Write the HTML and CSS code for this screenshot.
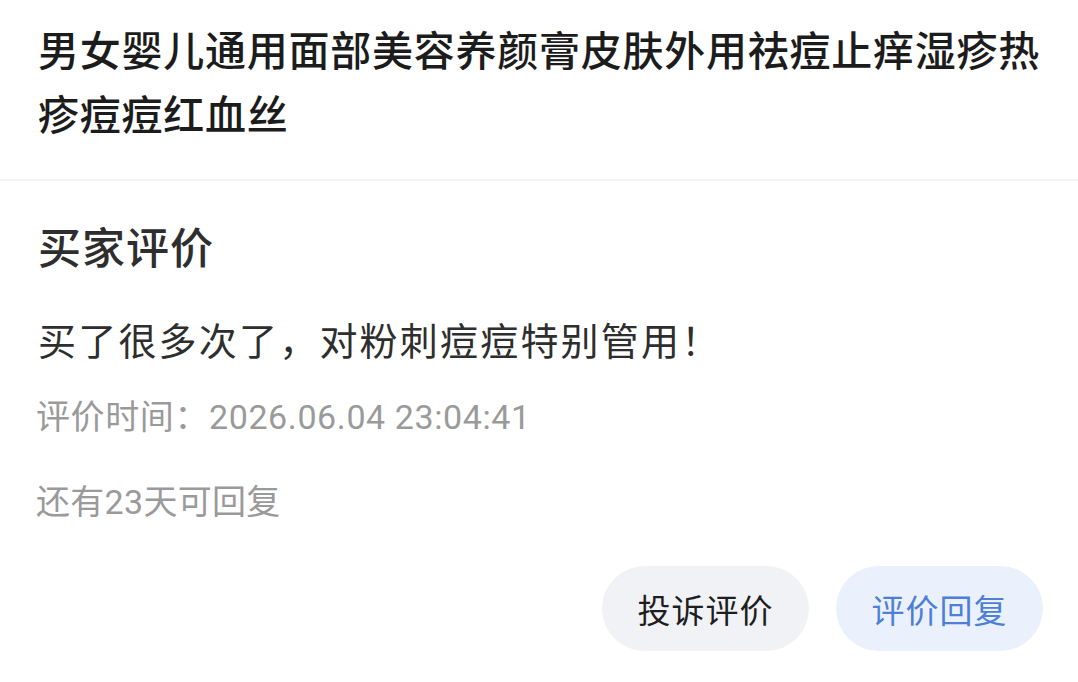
FILE: index.html
```html
<!DOCTYPE html>
<html lang="zh-CN">
<head>
<meta charset="utf-8">
<link rel="stylesheet" href="styles.css">
</head>
<body>
<div class="page">
  <header class="product">
    <h1 class="product-title">男女婴儿通用面部美容养颜膏皮肤外用祛痘止痒湿疹热疹痘痘红血丝</h1>
  </header>
  <div class="divider"></div>
  <section class="review">
    <h2 class="review-heading">买家评价</h2>
    <p class="review-text">买了很多次了，对粉刺痘痘特别管用！</p>
    <p class="review-time">评价时间：2026.06.04 23:04:41</p>
    <p class="review-remain">还有23天可回复</p>
    <div class="actions">
      <button class="btn btn-gray">投诉评价</button>
      <button class="btn btn-blue">评价回复</button>
    </div>
  </section>
</div>
</body>
</html>
```

FILE: styles.css
```css
* { box-sizing: border-box; }
html, body {
  margin: 0;
  padding: 0;
  background: #ffffff;
}
body {
  font-family: "Noto Sans CJK SC", "Noto Sans", sans-serif;
  color: #1a1a1a;
  width: 1078px;
  height: 682px;
  overflow: hidden;
}
.page {
  display: flex;
  flex-direction: column;
}
.product {
  padding: 16px 30px 0 38px;
  height: 179px;
}
.product-title {
  margin: 0;
  font-size: 41px;
  font-weight: 500;
  letter-spacing: 0.75px;
  line-height: 64px;
  color: #1c1c1c;
}
.divider {
  height: 2px;
  background: #f2f4f4;
}
.review {
  padding: 34px 35px 0 38px;
  display: flex;
  flex-direction: column;
}
.review-heading {
  margin: 0;
  font-size: 43px;
  font-weight: 500;
  line-height: 60px;
  color: #2e2e2e;
  letter-spacing: 1px;
}
.review-text {
  margin: 36px 0 0;
  font-size: 38px;
  font-weight: 400;
  line-height: 56px;
  color: #2e2e2e;
  letter-spacing: 2.2px;
}
.review-time {
  margin: 26px 0 0 -2px;
  font-family: Roboto, "Noto Sans CJK SC", sans-serif;
  font-size: 34px;
  line-height: 48px;
  color: #9a9a9a;
  letter-spacing: 0.6px;
}
.review-remain {
  margin: 37px 0 0 -2px;
  font-family: Roboto, "Noto Sans CJK SC", sans-serif;
  font-size: 34px;
  line-height: 48px;
  color: #9a9a9a;
  letter-spacing: 0.3px;
}
.actions {
  display: flex;
  justify-content: flex-end;
  gap: 27px;
  margin-top: 40px;
}
.btn {
  width: 207px;
  height: 85px;
  border: none;
  border-radius: 43px;
  font-family: "Noto Sans CJK SC", "Noto Sans", sans-serif;
  font-size: 33px;
  font-weight: 400;
  letter-spacing: 1px;
  padding: 0;
}
.btn-gray {
  background: #f1f2f5;
  color: #1e1e1e;
}
.btn-blue {
  background: #eaf1fd;
  color: #4d7fd6;
}
```
